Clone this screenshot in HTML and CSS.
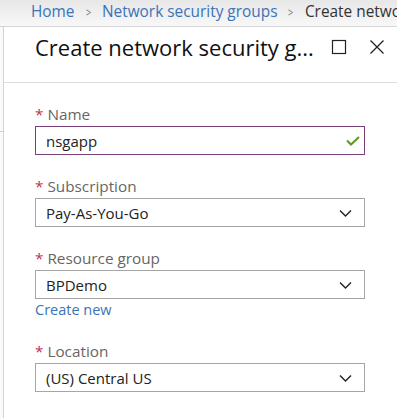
FILE: index.html
```html
<!DOCTYPE html>
<html lang="en">

<head>
    <meta charset="UTF-8">
    <meta name="viewport" content="width=device-width, initial-scale=1.0">
    <title>Create network security group</title>
    <link rel="stylesheet" href="styles.css">
</head>

<body>
    <div class="topbar">
        <a class="crumb">Home</a>
        <span class="sep">&gt;</span>
        <a class="crumb">Network security groups</a>
        <span class="sep">&gt;</span>
        <span class="crumb current">Create network security group</span>
    </div>

    <div class="main">
        <div class="gutter"><div class="tick"></div></div>
        <div class="blade">
            <div class="blade-header">
                <h2 class="title">Create network security g...</h2>
                <div class="actions">
                    <svg class="icon" width="16" height="16" viewBox="0 0 16 16">
                        <rect x="1.5" y="1.5" width="13" height="13" fill="none" stroke="#222" stroke-width="1.2" />
                    </svg>
                    <svg class="icon" width="16" height="16" viewBox="0 0 16 16">
                        <path d="M1.5 1.5 L14.5 14.5 M14.5 1.5 L1.5 14.5" stroke="#222" stroke-width="1.3" fill="none" />
                    </svg>
                </div>
            </div>

            <div class="form">
                <div class="field">
                    <label class="label"><span class="req">*</span> Name</label>
                    <div class="input valid">
                        <span class="value">nsgapp</span>
                        <svg width="14" height="10" viewBox="0 0 14 10">
                            <path d="M1 4.5 L5 8.5 L13 1" stroke="#5b9a1c" stroke-width="2" fill="none" />
                        </svg>
                    </div>
                </div>

                <div class="field">
                    <label class="label"><span class="req">*</span> Subscription</label>
                    <div class="input">
                        <span class="value">Pay-As-You-Go</span>
                        <svg width="13" height="8" viewBox="0 0 13 8">
                            <path d="M1 1.5 L6.5 7 L12 1.5" stroke="#222" stroke-width="1.4" fill="none" />
                        </svg>
                    </div>
                </div>

                <div class="field">
                    <label class="label"><span class="req">*</span> Resource group</label>
                    <div class="input">
                        <span class="value">BPDemo</span>
                        <svg width="13" height="8" viewBox="0 0 13 8">
                            <path d="M1 1.5 L6.5 7 L12 1.5" stroke="#222" stroke-width="1.4" fill="none" />
                        </svg>
                    </div>
                    <a class="link">Create new</a>
                </div>

                <div class="field">
                    <label class="label"><span class="req">*</span> Location</label>
                    <div class="input">
                        <span class="value">(US) Central US</span>
                        <svg width="13" height="8" viewBox="0 0 13 8">
                            <path d="M1 1.5 L6.5 7 L12 1.5" stroke="#222" stroke-width="1.4" fill="none" />
                        </svg>
                    </div>
                </div>
            </div>
        </div>
    </div>
</body>

</html>
```

FILE: styles.css
```css
body {
    margin: 0px;
    padding: 0px;
    font-family: "Open Sans", "Noto Sans", sans-serif;
    background-color: #fff;
    overflow: hidden;
}

.topbar {
    height: 27px;
    box-sizing: border-box;
    padding: 0px 0px 3px 31px;
    display: flex;
    align-items: center;
    gap: 10px;
    white-space: nowrap;
    overflow: hidden;
    font-size: 15.4px;
    background: linear-gradient(#e7e7e7, #f8f8f8);
    border-bottom: 1px solid #d6d6d6;
}

.crumb {
    color: #3b73b9;
}

.crumb.current {
    color: #333;
}

.sep {
    color: #777;
    font-size: 13px;
    transform: scaleX(0.7);
}

.main {
    display: flex;
    height: 391px;
}

.gutter {
    width: 3px;
    background-color: #fafafa;
}

.tick {
    margin-top: 104px;
    height: 1px;
    background-color: #d0d0d0;
}

.blade {
    flex: 1;
    border-left: 1px solid #d4d4d4;
}

.blade-header {
    height: 56px;
    box-sizing: border-box;
    border-bottom: 1px solid #dcdcdc;
    display: flex;
    align-items: flex-start;
    padding: 5px 0px 0px 31px;
}

.title {
    margin: 0px;
    font-size: 22px;
    font-weight: 400;
    color: #111;
    white-space: nowrap;
    line-height: 30px;
}

.actions {
    display: flex;
    gap: 22px;
    margin-left: auto;
    margin-right: 12px;
    padding-top: 7px;
}

.form {
    padding: 21px 0px 0px 31px;
}

.field {
    margin-bottom: 21px;
}

.label {
    display: block;
    font-size: 15.3px;
    line-height: 20px;
    color: #666;
    margin-bottom: 2px;
}

.req {
    color: #c4314b;
}

.input {
    width: 330px;
    height: 29px;
    box-sizing: border-box;
    border: 1px solid #a6a6a6;
    display: flex;
    align-items: center;
    justify-content: space-between;
    padding: 0px 12px 0px 10px;
    font-size: 15px;
    color: #222;
}

.input.valid {
    border-color: #7a3f7a;
    padding-right: 4px;
}

.link {
    display: block;
    margin-top: 1px;
    font-size: 14.5px;
    line-height: 20px;
    color: #3b73b9;
}
```
